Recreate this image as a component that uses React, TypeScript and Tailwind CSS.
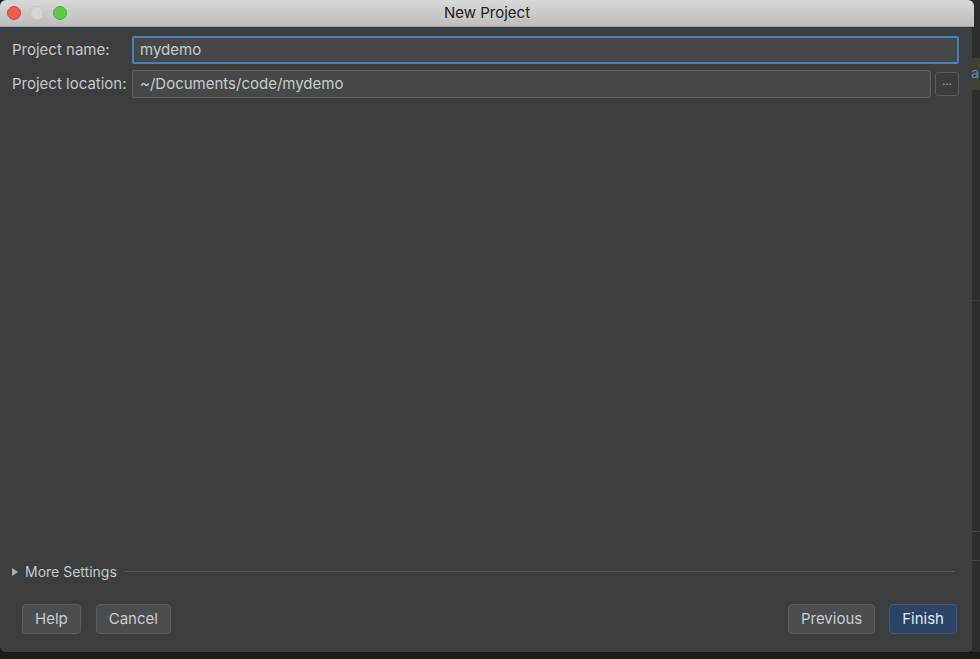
import React from "react";

function TrafficLights() {
  return (
    <div className="flex items-center gap-[9px] pl-[7px]">
      <span className="h-[14px] w-[14px] rounded-full bg-[#ee5b57] border border-[#d8473f]" />
      <span className="h-[14px] w-[14px] rounded-full bg-[#d6d6d6] border border-[#c4c4c4]" />
      <span className="h-[14px] w-[14px] rounded-full bg-[#5fc84a] border border-[#4aad38]" />
    </div>
  );
}

function Button({ label, primary }: { label: string; primary?: boolean }) {
  return (
    <button
      className={
        "h-[30px] rounded-[4px] border px-[12px] text-[15px] " +
        (primary
          ? "border-[#4c5a6c] bg-[#2c4466] text-[#e2e6ec]"
          : "border-[#5a5d5f] bg-[#4b4e50] text-[#c9cbcd]")
      }
    >
      {label}
    </button>
  );
}

export default function App() {
  return (
    <div
      className="relative h-[659px] w-[980px] overflow-hidden bg-[#1c1c1c]"
      style={{ fontFamily: "Inter, 'Open Sans', 'Liberation Sans', sans-serif" }}
    >
      {/* IDE bits behind the dialog */}
      <div className="absolute right-0 top-0 h-[652px] w-[8px] bg-[#2b2d2f]">
        <div className="mt-[58px] h-[32px] bg-[#3f4030]" />
        <div className="mt-[210px] h-px bg-[#3a3a3a]" />
        <div className="mt-[230px] h-px bg-[#454545]" />
        <div className="mt-[28px] h-px bg-[#454545]" />
      </div>
      <div className="absolute right-[1px] top-[66px] text-[14px] leading-none text-[#4a8fd6]">a</div>

      <div className="flex h-[652px] w-[974px] flex-col overflow-hidden rounded-[6px] bg-[#3c3f41]">
        {/* title bar */}
        <div className="relative flex h-[27px] shrink-0 items-center border-b border-[#9a9a9a] bg-gradient-to-b from-[#d8d8d8] to-[#bdbdbd]">
          <TrafficLights />
          <div className="absolute inset-0 flex items-center justify-center text-[15px] text-[#1d1d1d]">
            New Project
          </div>
        </div>

        {/* form */}
        <div className="flex flex-col gap-[6px] pl-[12px] pr-[15px] pt-[9px]">
          <div className="flex items-center">
            <div className="w-[120px] text-[15px] text-[#c4c6c8]">Project name:</div>
            <div className="flex h-[28px] flex-1 items-center rounded-[2px] border-2 border-[#4f7eb4] bg-[#45494a] px-[6px] text-[15px] text-[#c9cbcd]">
              mydemo
            </div>
          </div>
          <div className="flex items-center">
            <div className="w-[120px] text-[15px] text-[#c4c6c8]">Project location:</div>
            <div className="flex h-[28px] flex-1 items-center rounded-[2px] border border-[#5d6163] bg-[#45494a] px-[7px] text-[15px] text-[#c9cbcd]">
              ~/Documents/code/mydemo
            </div>
            <div className="ml-[4px] flex h-[24px] w-[24px] items-center justify-center rounded-[3px] border border-[#5a5d5f] bg-[#3c3f41] pb-[6px] text-[11px] leading-none text-[#a9abad]">
              ...
            </div>
          </div>
        </div>

        <div className="flex-1" />

        {/* more settings */}
        <div className="flex items-center pl-[12px] pr-[19px]">
          <svg width="6" height="8" viewBox="0 0 6 8" className="mr-[7px]">
            <path d="M0 0 L6 4 L0 8 Z" fill="#a9abad" />
          </svg>
          <span className="text-[14px] text-[#c4c6c8]">More Settings</span>
          <div className="ml-[7px] h-px flex-1 bg-[#54585a]" />
        </div>

        {/* buttons */}
        <div className="flex items-center justify-between pb-[18px] pl-[22px] pr-[17px] pt-[22px]">
          <div className="flex gap-[15px]">
            <Button label="Help" />
            <Button label="Cancel" />
          </div>
          <div className="flex gap-[14px]">
            <Button label="Previous" />
            <Button label="Finish" primary />
          </div>
        </div>
      </div>
    </div>
  );
}
